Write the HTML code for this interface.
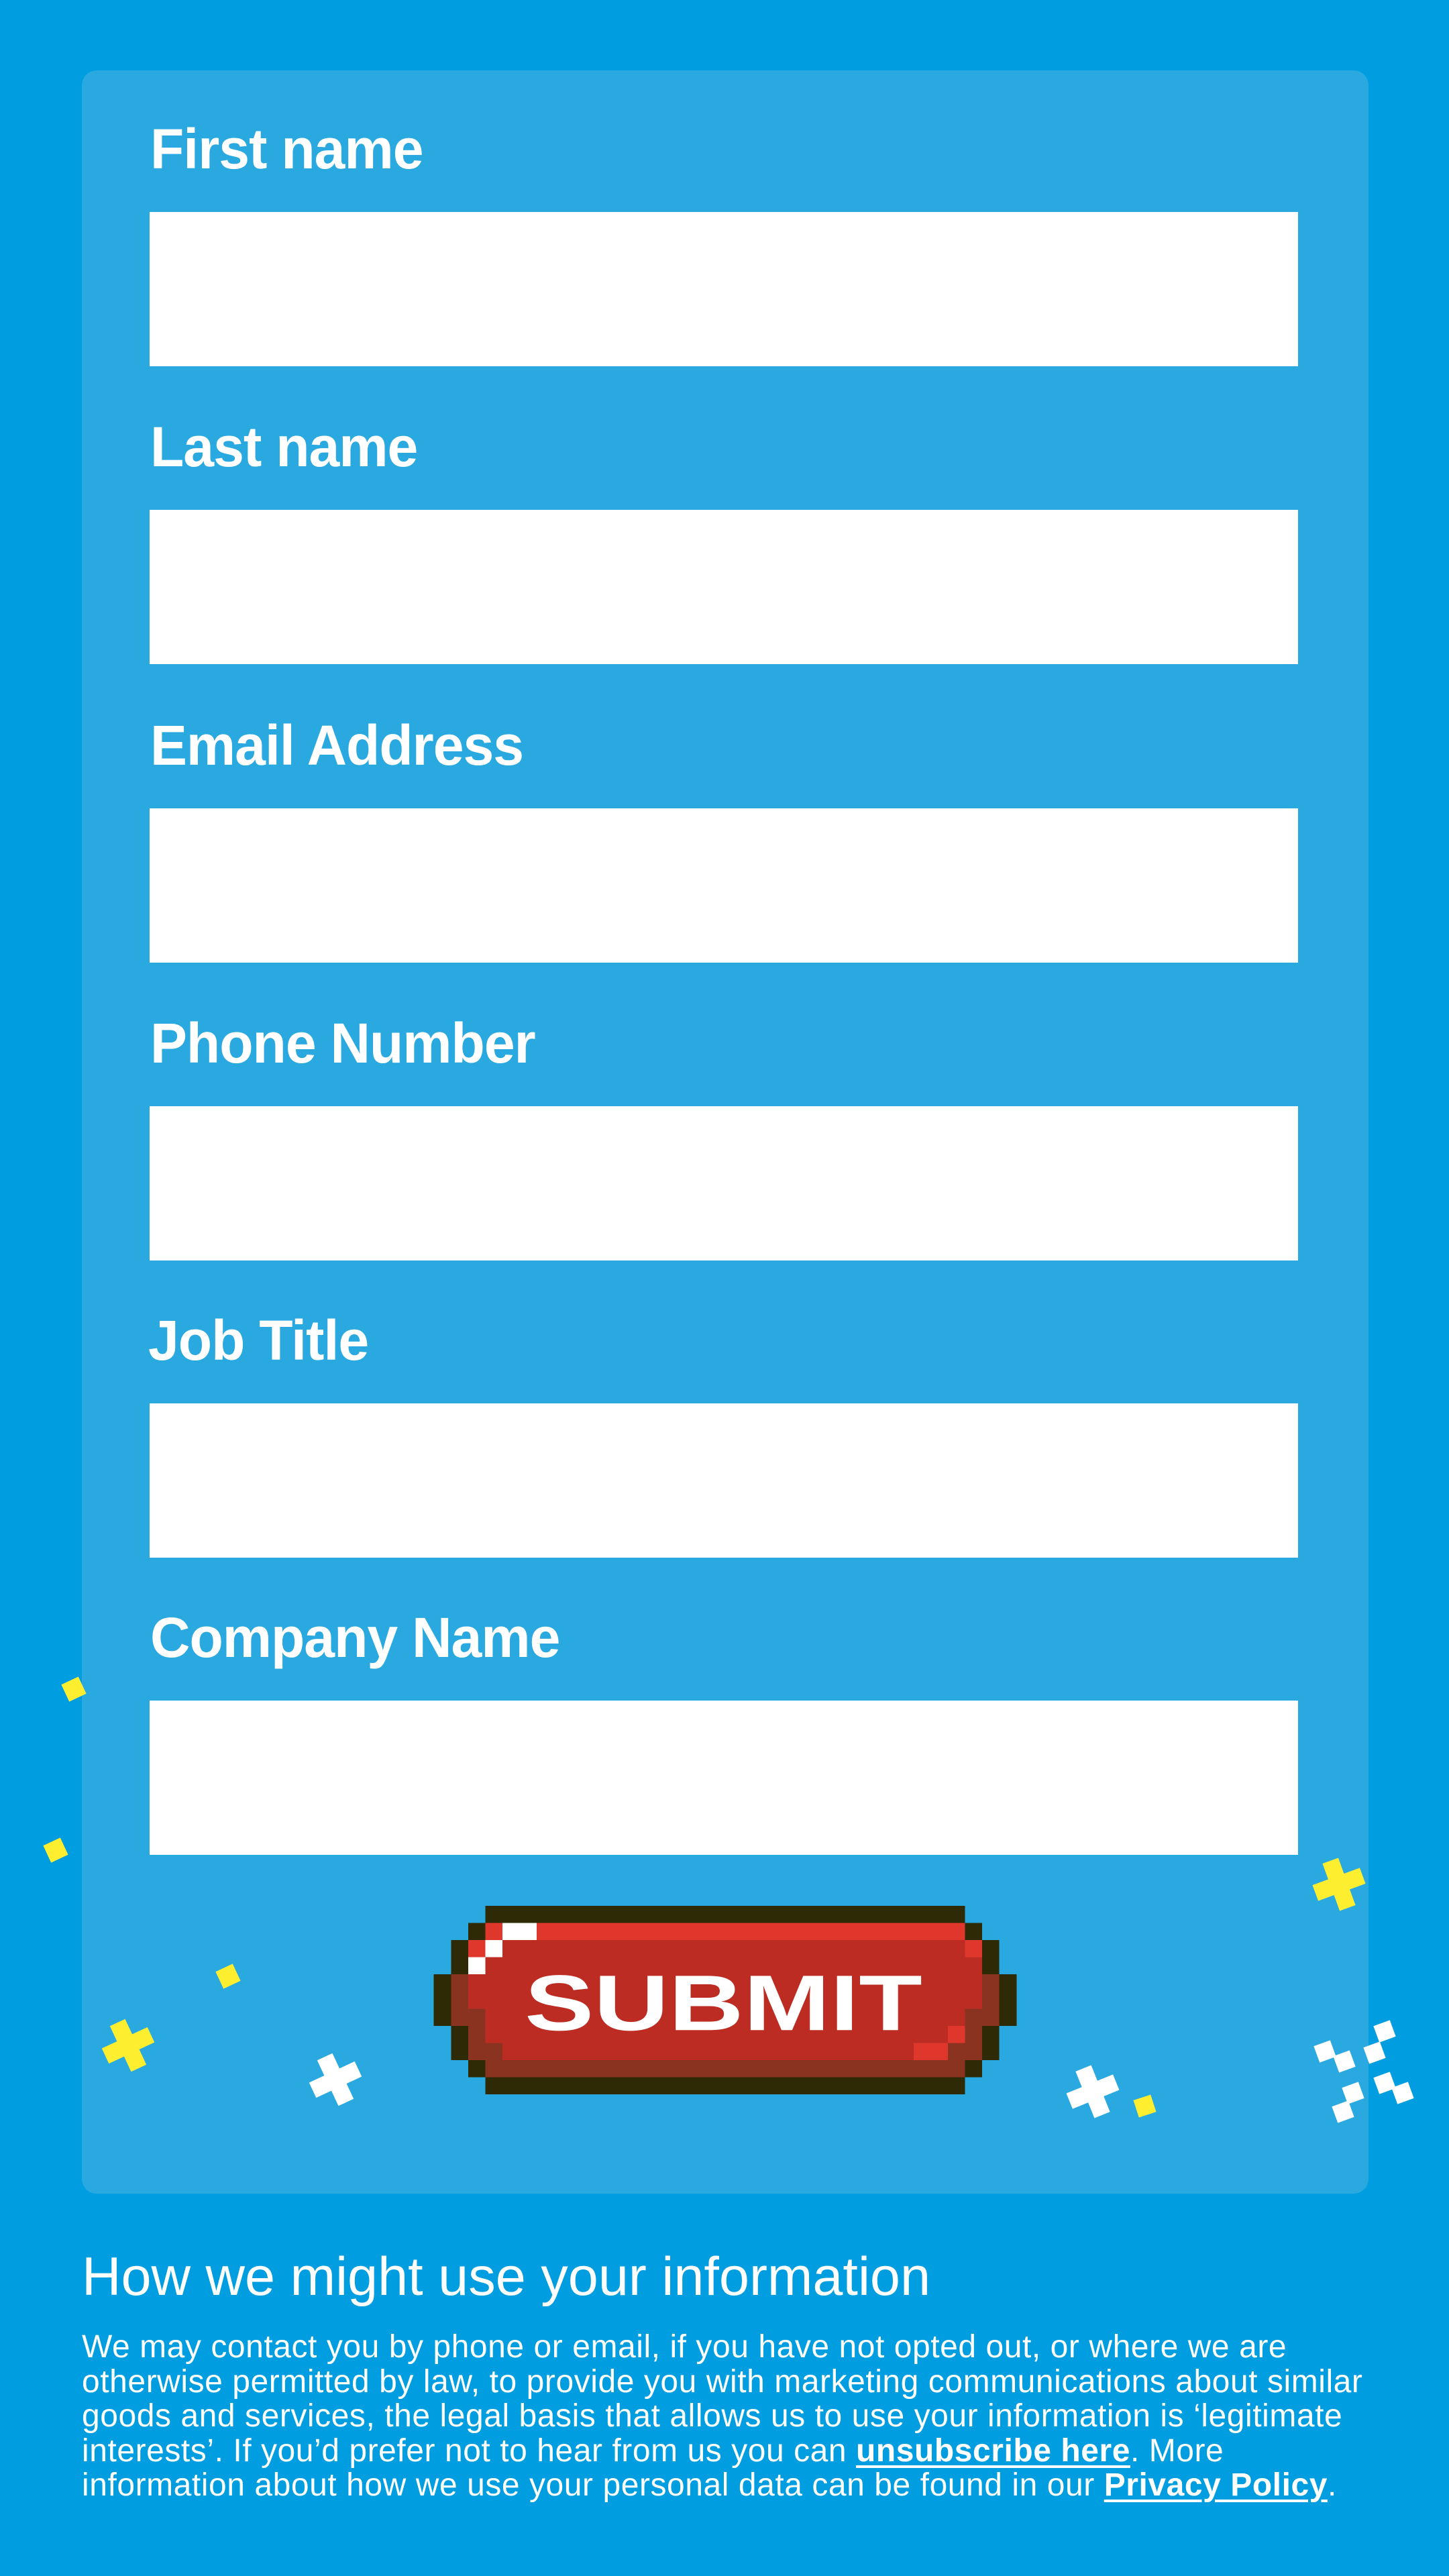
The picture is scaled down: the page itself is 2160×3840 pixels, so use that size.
<!DOCTYPE html>
<html><head><meta charset="utf-8"><style>
html,body{margin:0;padding:0}
body{width:2160px;height:3840px;background:#009ee0;position:relative;overflow:hidden;font-family:"Liberation Sans",sans-serif;color:#fff}
.card{position:absolute;left:122px;top:105px;width:1918px;height:3165px;background:#29a9e0;border-radius:22px}
.lbl{position:absolute;left:224px;font-weight:bold;font-size:84px;line-height:1;letter-spacing:-1px;white-space:nowrap;transform:scaleX(0.98);transform-origin:left}
.inp{position:absolute;left:223px;width:1712px;height:230px;background:#fff}
.sq{position:absolute;background:#fdee30}
h2{position:absolute;left:122px;top:3354px;margin:0;font-weight:normal;font-size:81px;line-height:1;white-space:nowrap}
.body{position:absolute;left:122px;top:3473px;font-size:48px;line-height:51.5px;letter-spacing:0.55px;white-space:nowrap}
.body b{text-decoration:underline;text-decoration-thickness:4px;text-underline-offset:6px}
</style></head><body>
<div class="card"></div>
<div class="lbl" style="top:180px">First name</div>
<div class="inp" style="top:316px"></div>
<div class="lbl" style="top:624px">Last name</div>
<div class="inp" style="top:760px"></div>
<div class="lbl" style="top:1069px">Email Address</div>
<div class="inp" style="top:1205px"></div>
<div class="lbl" style="top:1513px">Phone Number</div>
<div class="inp" style="top:1649px"></div>
<div class="lbl" style="top:1956px;left:221px">Job Title</div>
<div class="inp" style="top:2092px"></div>
<div class="lbl" style="top:2399px">Company Name</div>
<div class="inp" style="top:2535px"></div>

<svg style="position:absolute;left:646px;top:2841px" width="870" height="281" viewBox="0 0 34 11" shape-rendering="crispEdges">
<g fill="#2e2a05">
<rect x="3" y="0" width="28" height="1"/><rect x="3" y="10" width="28" height="1"/>
<rect x="2" y="1" width="1" height="1"/><rect x="31" y="1" width="1" height="1"/>
<rect x="2" y="9" width="1" height="1"/><rect x="31" y="9" width="1" height="1"/>
<rect x="1" y="2" width="1" height="2"/><rect x="32" y="2" width="1" height="2"/>
<rect x="1" y="7" width="1" height="2"/><rect x="32" y="7" width="1" height="2"/>
<rect x="0" y="4" width="1" height="3"/><rect x="33" y="4" width="1" height="3"/>
</g>
<rect x="2" y="2" width="30" height="7" fill="#bc2c22"/>
<rect x="3" y="1" width="28" height="8" fill="#bc2c22"/>
<rect x="1" y="4" width="1" height="3" fill="#bc2c22"/><rect x="32" y="4" width="1" height="3" fill="#bc2c22"/>
<g fill="#8a3320">
<rect x="3" y="9" width="28" height="1"/>
<rect x="1" y="4" width="1" height="3"/><rect x="32" y="4" width="1" height="3"/>
<rect x="2" y="6" width="1" height="3"/><rect x="31" y="6" width="1" height="3"/>
<rect x="3" y="8" width="1" height="1"/><rect x="30" y="8" width="1" height="1"/>
</g>
<g fill="#e0372d">
<rect x="3" y="1" width="28" height="1"/><rect x="2" y="2" width="1" height="1"/>
<rect x="31" y="2" width="1" height="1"/><rect x="30" y="7" width="1" height="1"/>
<rect x="28" y="8" width="2" height="1"/>
</g>
<g fill="#fff">
<rect x="4" y="1" width="2" height="1"/><rect x="3" y="2" width="1" height="1"/><rect x="2" y="3" width="1" height="1"/>
</g>
<text x="16.9" y="7.25" text-anchor="middle" font-family="Liberation Sans,sans-serif" font-weight="bold" font-size="4.6" fill="#fff" textLength="23.2" lengthAdjust="spacingAndGlyphs">SUBMIT</text>
</svg>

<!-- sparkles -->
<div class="sq" style="left:96px;top:2504px;width:28px;height:28px;transform:rotate(-25deg)"></div>
<div class="sq" style="left:69px;top:2744px;width:28px;height:28px;transform:rotate(-25deg)"></div>
<div class="sq" style="left:326px;top:2932px;width:28px;height:28px;transform:rotate(-25deg)"></div>
<div class="sq" style="left:1693px;top:3126px;width:27px;height:27px;transform:rotate(-18deg)"></div>
<svg style="position:absolute;left:151px;top:3009px" width="80" height="80" viewBox="-1.6 -1.6 3.2 3.2"><path transform="rotate(-25)" d="M-0.5-1.5h1v1h1v1h-1v1h-1v-1h-1v-1h1z" fill="#fdee30"/></svg>
<svg style="position:absolute;left:1956px;top:2769px" width="80" height="80" viewBox="-1.6 -1.6 3.2 3.2"><path transform="rotate(-20)" d="M-0.5-1.5h1v1h1v1h-1v1h-1v-1h-1v-1h1z" fill="#fdee30"/></svg>
<svg style="position:absolute;left:460px;top:3060px" width="80" height="80" viewBox="-1.6 -1.6 3.2 3.2"><path transform="rotate(-25)" d="M-0.5-1.5h1v1h1v1h-1v1h-1v-1h-1v-1h1z" fill="#fff"/></svg>
<svg style="position:absolute;left:1589px;top:3078px" width="80" height="80" viewBox="-1.6 -1.6 3.2 3.2"><path transform="rotate(-22)" d="M-0.5-1.5h1v1h1v1h-1v1h-1v-1h-1v-1h1z" fill="#fff"/></svg>
<svg style="position:absolute;left:1950px;top:3010px" width="160" height="160" viewBox="1950 3010 160 160">
<g fill="#fff">
<rect x="1962" y="3045" width="26" height="26" transform="rotate(-20 1975 3058)"/>
<rect x="1991" y="3060" width="26" height="26" transform="rotate(-20 2004 3073)"/>
<rect x="2051" y="3015" width="26" height="26" transform="rotate(-20 2064 3028)"/>
<rect x="2036" y="3047" width="26" height="26" transform="rotate(-20 2049 3060)"/>
<rect x="2051" y="3092" width="26" height="26" transform="rotate(-20 2064 3105)"/>
<rect x="2078" y="3107" width="26" height="26" transform="rotate(-20 2091 3120)"/>
<rect x="2004" y="3107" width="26" height="26" transform="rotate(-20 2017 3120)"/>
<rect x="1989" y="3135" width="26" height="26" transform="rotate(-20 2002 3148)"/>
</g></svg>

<h2>How we might use your information</h2>
<div class="body">We may contact you by phone or email, if you have not opted out, or where we are<br>
otherwise permitted by law, to provide you with marketing communications about similar<br>
goods and services, the legal basis that allows us to use your information is ‘legitimate<br>
interests’. If you’d prefer not to hear from us you can <b>unsubscribe here</b>. More<br>
information about how we use your personal data can be found in our <b>Privacy Policy</b>.</div>
</body></html>
